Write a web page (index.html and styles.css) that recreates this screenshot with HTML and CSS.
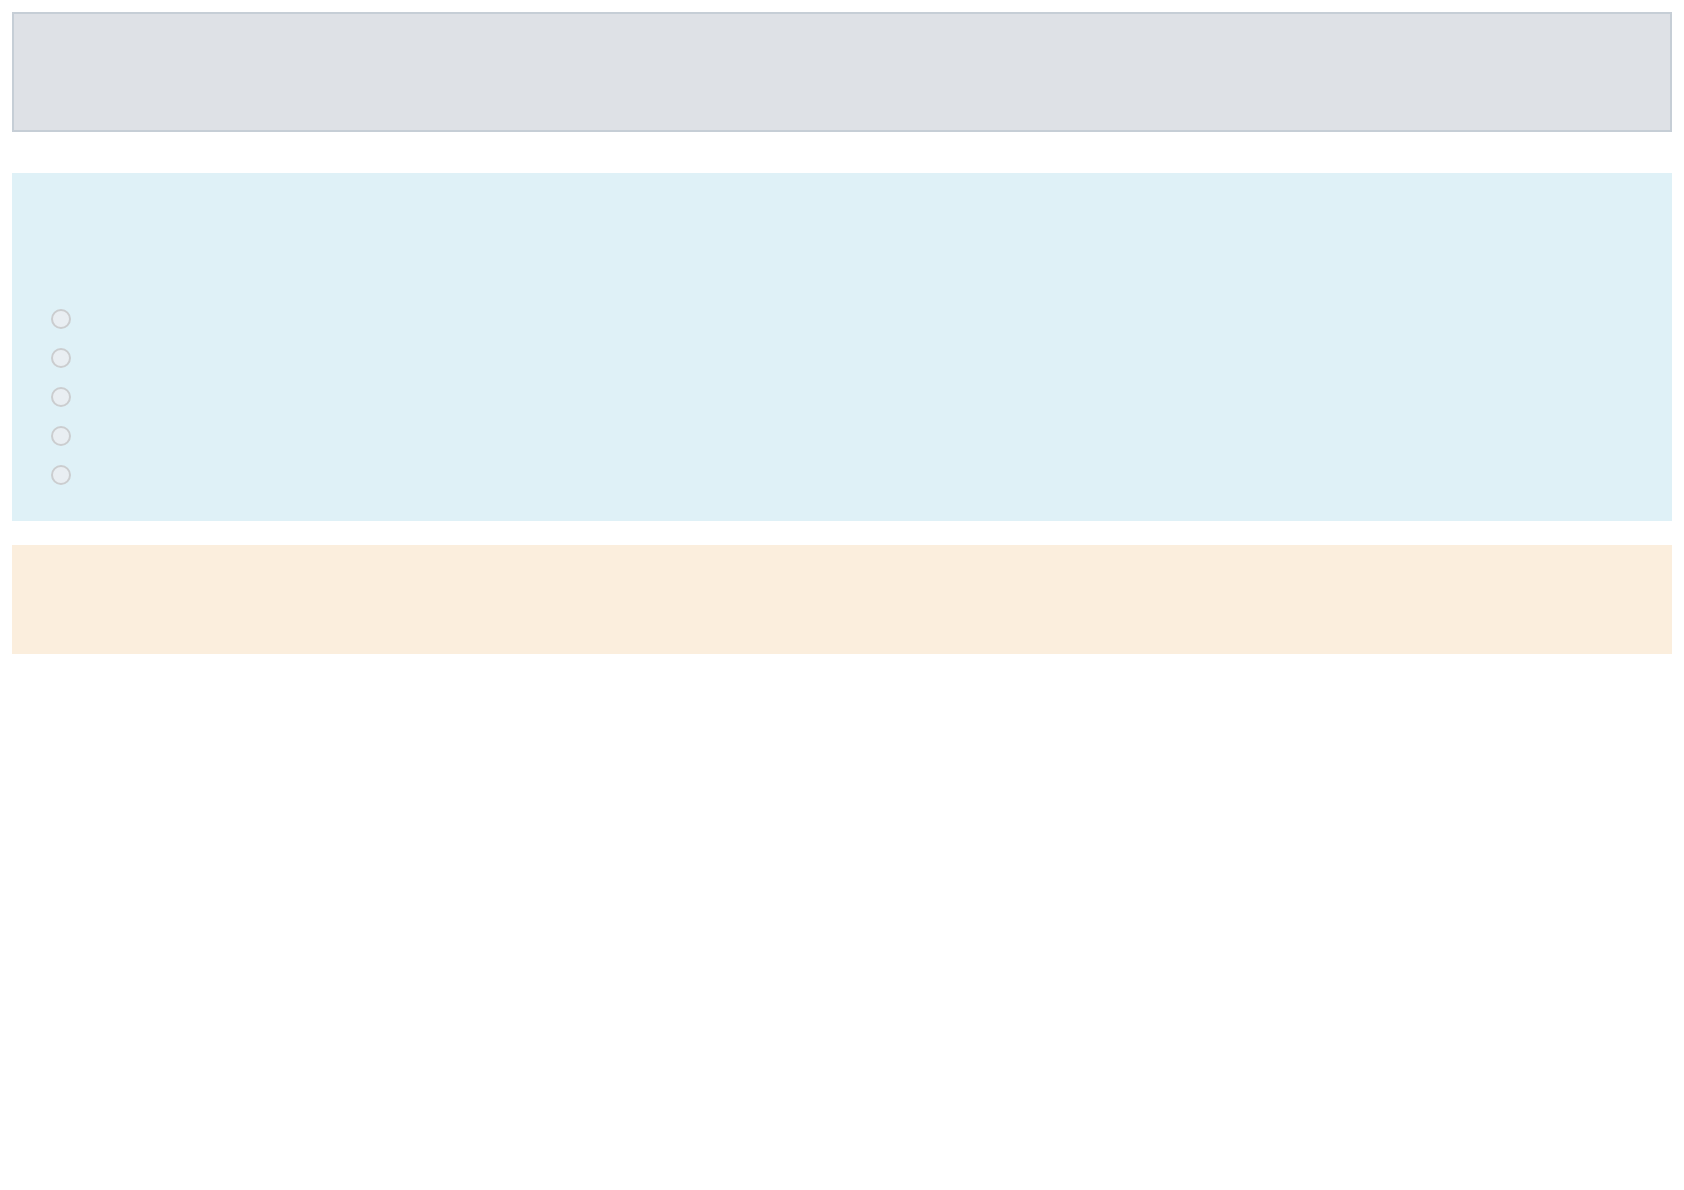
FILE: index.html
```html
<!DOCTYPE html>
<html lang="en">
<head>
    <meta charset="UTF-8">
    <meta name="viewport" content="width=device-width, initial-scale=1.0">
    <title>Survey</title>
    <link rel="stylesheet" href="styles.css">
</head>
<body>
    <div class="page">
        <div class="header"></div>

        <div class="question">
            <div class="question-text"></div>
            <div class="options">
                <label class="option"><input type="radio" name="q1" value="1"><span></span></label>
                <label class="option"><input type="radio" name="q1" value="2"><span></span></label>
                <label class="option"><input type="radio" name="q1" value="3"><span></span></label>
                <label class="option"><input type="radio" name="q1" value="4"><span></span></label>
                <label class="option"><input type="radio" name="q1" value="5"><span></span></label>
            </div>
        </div>

        <div class="notice"></div>
    </div>
</body>
</html>
```

FILE: styles.css
```css
body {
    font-family: "Liberation Sans", Arial, sans-serif;
    margin: 0;
    background-color: #fff;
}

.page {
    display: flex;
    flex-direction: column;
    padding: 12px;
}

.header {
    height: 116px;
    background-color: #dee1e6;
    border: 2px solid #c6ced6;
}

.question {
    margin-top: 41px;
    height: 348px;
    background-color: #dff1f7;
    padding: 136px 0 0 39px;
    box-sizing: border-box;
}

.options {
    display: flex;
    flex-direction: column;
    gap: 19px;
}

.option {
    display: flex;
    align-items: center;
    height: 20px;
}

.option input {
    appearance: none;
    -webkit-appearance: none;
    width: 20px;
    height: 20px;
    margin: 0;
    border: 2px solid #cbcdcf;
    border-radius: 50%;
    background-color: #e9eef2;
    box-sizing: border-box;
}

.notice {
    margin-top: 24px;
    height: 109px;
    background-color: #fbeedd;
}
```
